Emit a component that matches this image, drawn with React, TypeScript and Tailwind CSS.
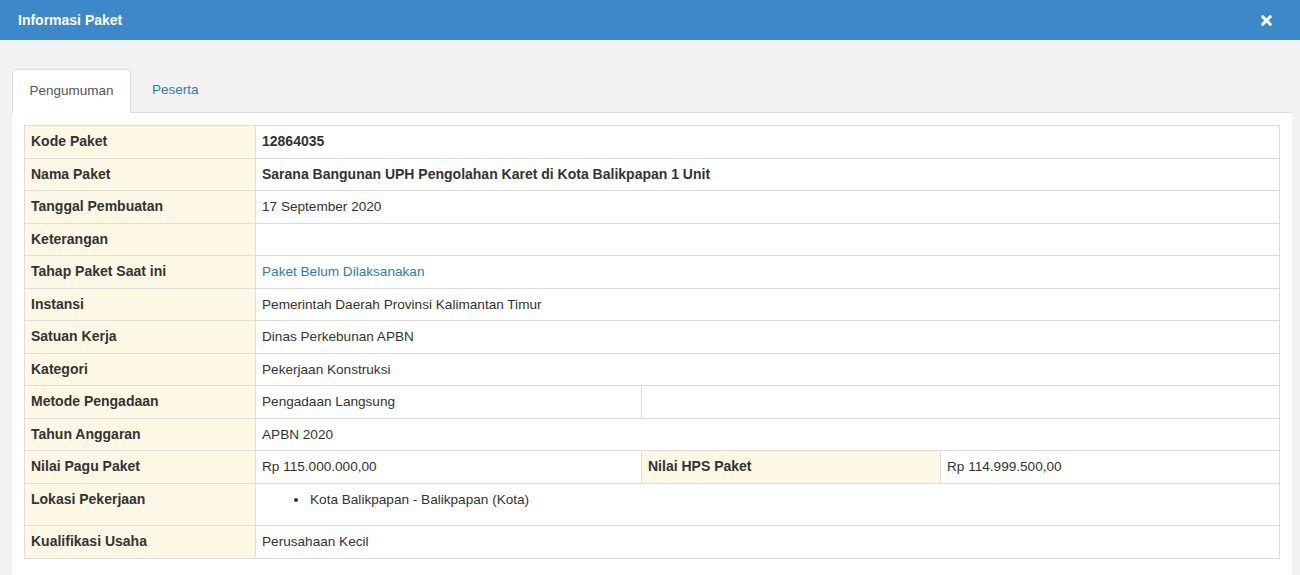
import { X } from "lucide-react";

const font = { fontFamily: '"Liberation Sans", Arial, sans-serif' };

type Row = {
  label: string;
  value?: React.ReactNode;
  bold?: boolean;
  extra?: "empty" | { label: string; value: string };
};

const rows: Row[] = [
  { label: "Kode Paket", value: "12864035", bold: true },
  { label: "Nama Paket", value: "Sarana Bangunan UPH Pengolahan Karet di Kota Balikpapan 1 Unit", bold: true },
  { label: "Tanggal Pembuatan", value: "17 September 2020" },
  { label: "Keterangan", value: "" },
  { label: "Tahap Paket Saat ini", value: <a className="text-[#337ab7]">Paket Belum Dilaksanakan</a> },
  { label: "Instansi", value: "Pemerintah Daerah Provinsi Kalimantan Timur" },
  { label: "Satuan Kerja", value: "Dinas Perkebunan APBN" },
  { label: "Kategori", value: "Pekerjaan Konstruksi" },
  { label: "Metode Pengadaan", value: "Pengadaan Langsung", extra: "empty" },
  { label: "Tahun Anggaran", value: "APBN 2020" },
  {
    label: "Nilai Pagu Paket",
    value: "Rp 115.000.000,00",
    extra: { label: "Nilai HPS Paket", value: "Rp 114.999.500,00" },
  },
  {
    label: "Lokasi Pekerjaan",
    value: (
      <ul className="list-disc pl-[47px] mb-[10px]">
        <li className="pl-[1px]">Kota Balikpapan - Balikpapan (Kota)</li>
      </ul>
    ),
  },
  { label: "Kualifikasi Usaha", value: "Perusahaan Kecil" },
];

const cell = "border border-[#ddd] px-[6px] py-[7px] align-top leading-[17.5px]";
const plain = `${cell} text-[13.6px]`;

export default function App() {
  return (
    <div className="w-[1300px] h-[575px] overflow-hidden bg-[#f2f2f2] text-[14px] text-[#333]" style={font}>
      <div className="h-[41px] bg-[#3d88c9] flex items-center justify-between pl-[18px] pr-[26px] border-b border-[#e3f4f4]">
        <h4 className="text-white font-bold text-[14px]">Informasi Paket</h4>
        <X className="w-[15px] h-[15px] text-white" strokeWidth={5} />
      </div>

      <div className="pl-3 pr-2 pt-7">
        <div className="flex border-b border-[#ddd] h-[44px]">
          <div className="bg-white border border-[#ddd] border-b-0 rounded-t-[4px] w-[119px] flex items-center justify-center -mb-px text-[#555] text-[13.5px]">
            Pengumuman
          </div>
          <div className="px-[21px] flex items-center text-[#337ab7] text-[13.5px]">Peserta</div>
        </div>

        <div className="bg-white pl-3 pr-3 pt-3 h-[500px]">
          <table className="w-full border-collapse">
            <colgroup>
              <col className="w-[231px]" />
              <col className="w-[386px]" />
              <col className="w-[299px]" />
              <col />
            </colgroup>
            <tbody>
              {rows.map((r) => (
                <tr key={r.label}>
                  <td className={`${cell} bg-[#fcf8e3] font-bold`}>{r.label}</td>
                  {r.extra === undefined && (
                    <td colSpan={3} className={r.bold ? `${cell} font-bold` : plain}>
                      {r.value}
                    </td>
                  )}
                  {r.extra === "empty" && (
                    <>
                      <td className={plain}>{r.value}</td>
                      <td colSpan={2} className={cell}></td>
                    </>
                  )}
                  {r.extra && r.extra !== "empty" && (
                    <>
                      <td className={plain}>{r.value}</td>
                      <td className={`${cell} bg-[#fcf8e3] font-bold`}>{r.extra.label}</td>
                      <td className={plain}>{r.extra.value}</td>
                    </>
                  )}
                </tr>
              ))}
            </tbody>
          </table>
        </div>
      </div>
    </div>
  );
}
